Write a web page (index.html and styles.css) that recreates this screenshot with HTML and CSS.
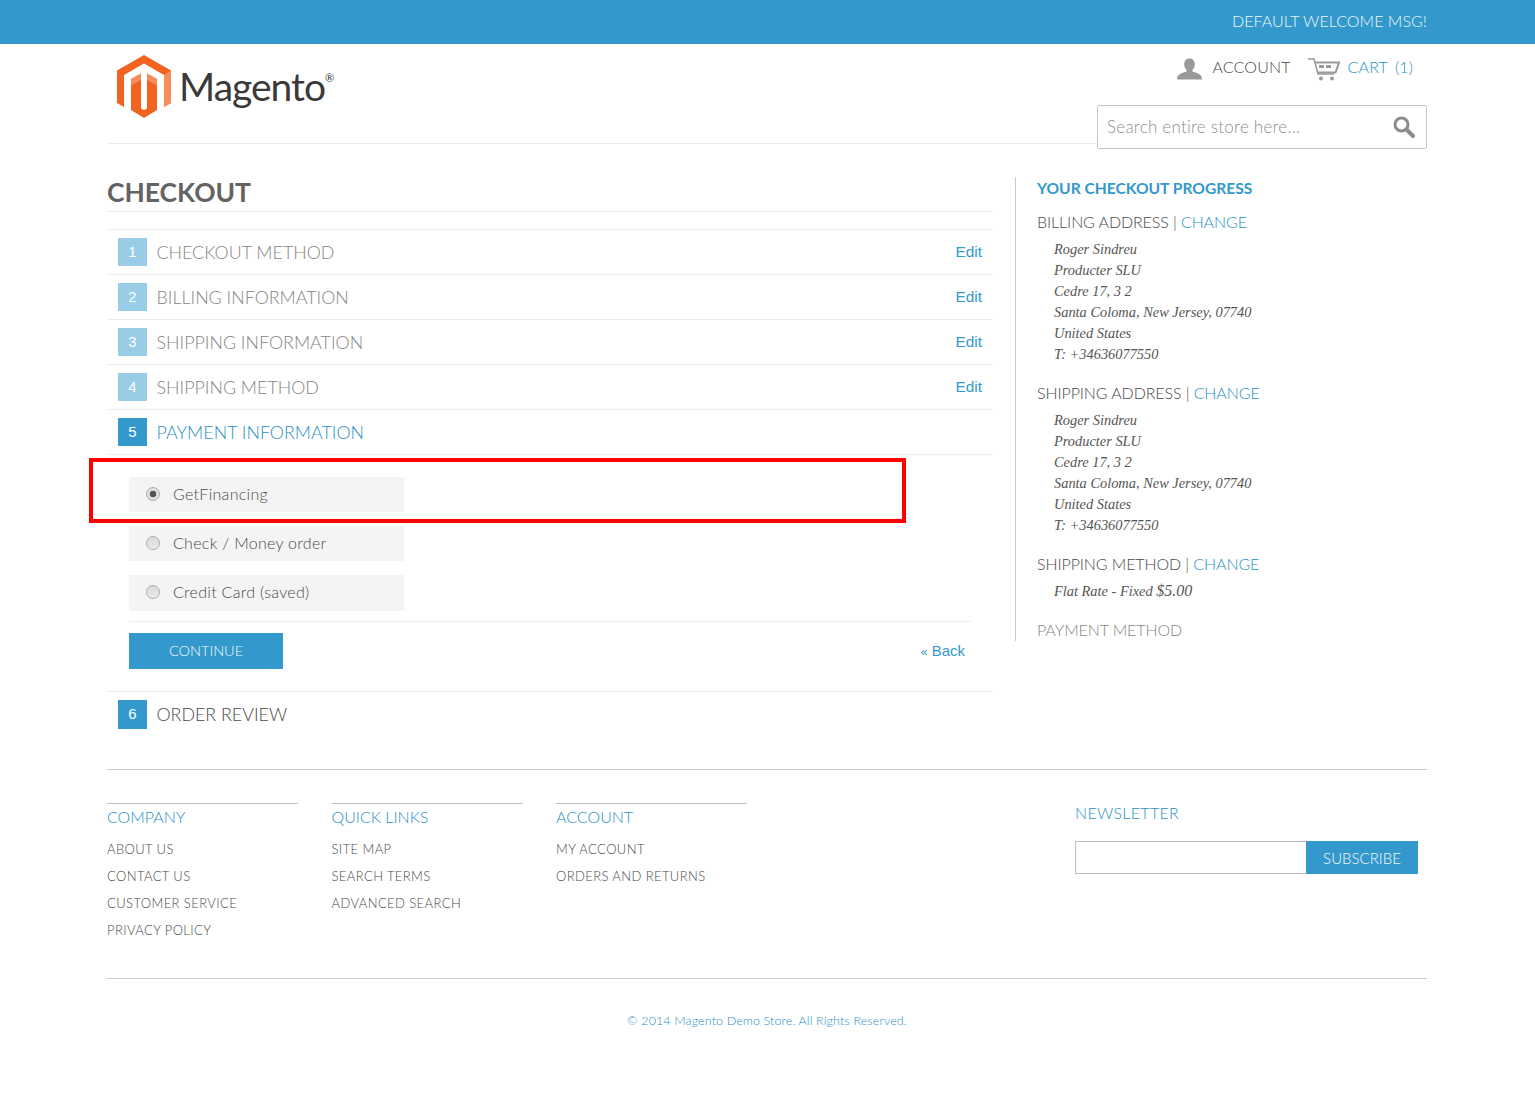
FILE: index.html
```html
<!DOCTYPE html>
<html lang="en">
<head>
<meta charset="utf-8">
<title>Checkout</title>
<link rel="stylesheet" href="styles.css">
</head>
<body>
<div class="topbar"><span>Default welcome msg!</span></div>
<div class="page">
  <header class="site-header">
    <a class="logo">
      <svg class="logo-mark" viewBox="0 0 54 64" width="54" height="64">
        <path fill="#f26322" d="M27 0 54 15.500V48L47 52V20L27 8.500 7 20V52L0 48V15.500Z"/>
        <path fill="#f68e5b" d="M47 20 54 15.500V48L47 52Z"/>
        <path fill="#f26322" d="M14 24 24 18.500V53.500L27 55 30 53.500V18.500L40 24V55L27 63 14 55Z"/>
        <path fill="#f68e5b" d="M30 18.500 40 24V30L30 25ZM14 24 24 18.500V25L14 30Z"/>
      </svg>
      <span class="logo-text">Magento<sup class="reg">®</sup></span>
    </a>
    <div class="header-right">
      <div class="account-links">
        <svg class="icon-user" viewBox="0 0 26 22" width="26" height="22"><path fill="#999" d="M13 0c3.500 0 5.500 2.500 5.500 6 0 2.500-1 4.500-2.500 6v1.500c3 1 7 2 9 4.500 .6 1 1 2 1 4H0c0-2 .4-3 1-4 2-2.500 6-3.500 9-4.500V12C8.500 10.500 7.500 8.500 7.500 6 7.500 2.500 9.500 0 13 0Z"/></svg>
        <a class="link-account">Account</a>
        <svg class="icon-cart" viewBox="0 0 32 23" width="32" height="23"><path fill="none" stroke="#999" stroke-width="1.600" d="M0 1H6L10 16H26"/><path fill="none" stroke="#999" stroke-width="2" d="M7 4.500H31L27.500 14.500H10"/><path fill="#999" d="M11 7h5v3h-5zM18 7h5v3h-5z"/><circle cx="13" cy="20.500" r="2" fill="#999"/><circle cx="24" cy="20.500" r="2" fill="#999"/></svg>
        <a class="link-cart">Cart <span class="cart-count">(1)</span></a>
      </div>
      <div class="search">
        <span class="search-text">Search entire store here...</span>
        <svg class="icon-search" viewBox="0 0 22 22" width="22" height="22"><circle cx="8.500" cy="8.500" r="6.500" fill="none" stroke="#8c8c8c" stroke-width="3"/><path stroke="#8c8c8c" stroke-width="4" stroke-linecap="round" d="M13.500 13.500 20 20"/></svg>
      </div>
    </div>
  </header>

  <div class="columns">
    <main class="main">
      <h1 class="page-title">Checkout</h1>
      <ol class="steps">
        <li class="step done"><span class="num">1</span><span class="step-title">Checkout Method</span><a class="edit">Edit</a></li>
        <li class="step done"><span class="num">2</span><span class="step-title">Billing Information</span><a class="edit">Edit</a></li>
        <li class="step done"><span class="num">3</span><span class="step-title">Shipping Information</span><a class="edit">Edit</a></li>
        <li class="step done"><span class="num">4</span><span class="step-title">Shipping Method</span><a class="edit">Edit</a></li>
        <li class="step active"><span class="num">5</span><span class="step-title">Payment Information</span></li>
        <li class="payment">
          <div class="method"><span class="radio checked"></span><span>GetFinancing</span></div>
          <div class="method"><span class="radio"></span><span>Check / Money order</span></div>
          <div class="method method-last"><span class="radio"></span><span>Credit Card (saved)</span></div>
          <div class="buttons"><button class="btn-continue">Continue</button><a class="back"><small>«</small> Back</a></div>
        </li>
        <li class="step pending"><span class="num">6</span><span class="step-title">Order Review</span></li>
      </ol>
      <div class="highlight"></div>
    </main>
    <aside class="side">
      <h2 class="side-title">Your Checkout Progress</h2>
      <h3 class="side-head">Billing Address | <a>Change</a></h3>
      <address class="addr">Roger Sindreu<br>Producter SLU<br>Cedre 17, 3 2<br>Santa Coloma, New Jersey, 07740<br>United States<br>T: +34636077550</address>
      <h3 class="side-head">Shipping Address | <a>Change</a></h3>
      <address class="addr">Roger Sindreu<br>Producter SLU<br>Cedre 17, 3 2<br>Santa Coloma, New Jersey, 07740<br>United States<br>T: +34636077550</address>
      <h3 class="side-head">Shipping Method | <a>Change</a></h3>
      <address class="addr">Flat Rate - Fixed <span class="price">$5.00</span></address>
      <h3 class="side-head muted">Payment Method</h3>
    </aside>
  </div>

  <footer class="footer">
    <div class="foot-links">
      <div class="foot-col"><h4>Company</h4><a>About Us</a><a>Contact Us</a><a>Customer Service</a><a>Privacy Policy</a></div>
      <div class="foot-col"><h4>Quick Links</h4><a>Site Map</a><a>Search Terms</a><a>Advanced Search</a></div>
      <div class="foot-col"><h4>Account</h4><a>My Account</a><a>Orders and Returns</a></div>
      <div class="newsletter">
        <h4>Newsletter</h4>
        <div class="news-form"><div class="news-input"></div><button class="btn-sub">Subscribe</button></div>
      </div>
    </div>
    <div class="copyright">© 2014 Magento Demo Store. All Rights Reserved.</div>
  </footer>
</div>
</body>
</html>
```
FILE: styles.css
```css
* { box-sizing: border-box; }
html, body { margin: 0; padding: 0; }
body { font-family: Lato, "Open Sans", sans-serif; font-weight: 300; color: #4a4a4a; background: #fff; height: 1096px; overflow: hidden; }
a { color: #2a90c5; text-decoration: none; }
h1, h2, h3, h4, ol, address { margin: 0; padding: 0; font-style: normal; font-weight: 300; list-style: none; }

.topbar { height: 44px; background: #3399cc; color: #eef6fa; font-size: 16px; letter-spacing: .05px; text-transform: uppercase; text-align: right; line-height: 42px; padding-right: 108px; }
.page { padding: 0 108px 0 107px; }

.site-header { height: 100px; border-bottom: 1px solid #ededed; display: flex; justify-content: space-between; }
.logo { display: flex; align-items: flex-start; padding: 11px 0 0 10px; }
.logo-mark { flex: none; }
.logo-text { font-size: 39px; font-weight: 400; letter-spacing: -1px; line-height: 62px; margin-left: 8px; color: #3a3a3a; }
.reg { font-size: 11px; vertical-align: 19px; line-height: 0; letter-spacing: 0; }

.header-right { width: 330px; display: flex; flex-direction: column; align-items: flex-end; }
.account-links { display: flex; align-items: center; flex: none; height: 61px; padding: 9px 14px 26px 0; font-size: 16px; letter-spacing: .15px; text-transform: uppercase; }
.icon-user { margin-right: 10px; margin-top: 6px; width: 25px; }
.link-account { color: #4a4a4a; }
.icon-cart { margin: 6px 8px 0 17px; }
.cart-count { margin-left: 3px; }
.search { width: 330px; height: 44px; flex: none; border: 1px solid #c4c4c4; border-radius: 2px; background: #fff; display: flex; align-items: center; justify-content: space-between; padding: 0 11px 2px 9px; font-size: 17px; letter-spacing: .25px; color: #8f8f8f; }
.icon-search { margin-top: 2px; }

.columns { display: flex; padding-top: 33px; }
.main { width: 886px; position: relative; }
.page-title { font-size: 26.400px; font-weight: 700; color: #636363; text-transform: uppercase; line-height: 31px; height: 35px; border-bottom: 1px solid #ededed; }
.steps { margin-top: 17px; }
.step { height: 45px; border-top: 1px solid #ededed; display: flex; align-items: center; padding: 0 11px; }
.num { width: 29px; height: 28px; margin-right: 9.500px; background: #3399cc; color: #fff; text-align: center; font-family: "Liberation Sans", sans-serif; font-weight: 400; font-size: 15px; line-height: 28px; flex: none; }
.step-title { font-size: 17.850px; text-transform: uppercase; flex: 1; }
.edit { font-family: "Liberation Sans", sans-serif; font-weight: 400; font-size: 15.400px; margin-top: 0; color: #3399cc; }
.done .num { background: #99cce6; }
.done .step-title { color: #858585; }
.active .step-title { color: #2a90c5; }
.payment { border-top: 1px solid #ededed; padding: 22px 22px; height: 237px; }
.method { width: 275px; height: 35px; background: #f4f4f4; display: flex; align-items: center; padding: 0 0 2px 17px; font-size: 16px; letter-spacing: .3px; }
.method + .method { margin-top: 14px; }
.method-last { height: 36px; padding-bottom: 3px; }
.radio { width: 14px; height: 14px; border-radius: 50%; border: 1px solid #adadad; background: linear-gradient(#d9d9d9, #ececec); margin-right: 13px; flex: none; }
.radio.checked { background: radial-gradient(circle, #555 0 3px, #dedede 3.6px); }
.buttons { border-top: 1px solid #ededed; margin-top: 10px; width: 842px; padding-top: 11px; display: flex; justify-content: space-between; align-items: flex-start; }
.btn-continue { width: 154px; height: 36px; background: #3399cc; color: #f2f8fb; border: 0; font: 300 14.500px Lato, sans-serif; text-transform: uppercase; padding: 0 0 2px; }
.back { font-family: "Liberation Sans", sans-serif; font-weight: 400; font-size: 15px; margin: 9px 6px 0 0; color: #3399cc; }
.back small { font-size: 12px; }
.pending { border-top: 1px solid #ededed; }
.pending .num { height: 29px; }
.highlight { position: absolute; left: -18px; top: 281px; width: 817px; height: 65px; border: 4px solid #ff0000; }

.side { margin-left: 22px; width: 412px; height: 464px; border-left: 1px solid #cccccc; padding: 1px 0 0 21px; }
.side-title { font-size: 15.600px; font-weight: 700; color: #3399cc; text-transform: uppercase; line-height: 20px; margin-bottom: 14px; }
.side-head { font-size: 16px; letter-spacing: -.1px; text-transform: uppercase; line-height: 20px; margin-bottom: 7px; }
.side-head.muted { color: #858585; margin-top: 18px; }
.addr { font-family: "Liberation Serif", serif; font-weight: 400; font-style: italic; font-size: 14.400px; line-height: 21px; padding-left: 17px; margin-bottom: 18px; color: #555; }
.price { font-size: 16px; line-height: 0; }

.footer { margin-top: 33px; border-top: 1px solid #cccccc; }
.foot-links { height: 209px; border-bottom: 1px solid #cccccc; display: flex; padding-top: 33px; }
.foot-col { width: 191px; margin-right: 33.500px; border-top: 1px solid #bfbfbf; }
.foot-col h4 { color: #2a90c5; font-size: 16px; text-transform: uppercase; line-height: 25px; margin-bottom: 7px; }
.foot-col a { display: block; color: #4a4a4a; font-size: 13px; letter-spacing: .4px; text-transform: uppercase; line-height: 27px; }
.newsletter { margin-left: 294.500px; }
.newsletter h4 { font-size: 16px; letter-spacing: .3px; text-transform: uppercase; line-height: 20px; margin-bottom: 18px; color: #2a90c5; }
.news-form { display: flex; height: 33px; width: 343px; }
.news-input { flex: 1; border: 1px solid #bdbdbd; border-right: 0; }
.btn-sub { width: 112px; background: #3399cc; color: #f2f8fb; border: 0; font: 300 15px Lato, sans-serif; text-transform: uppercase; padding: 0; }
.copyright { text-align: center; color: #2a90c5; font-size: 12.500px; letter-spacing: .12px; line-height: 16px; padding-top: 34px; }
```
